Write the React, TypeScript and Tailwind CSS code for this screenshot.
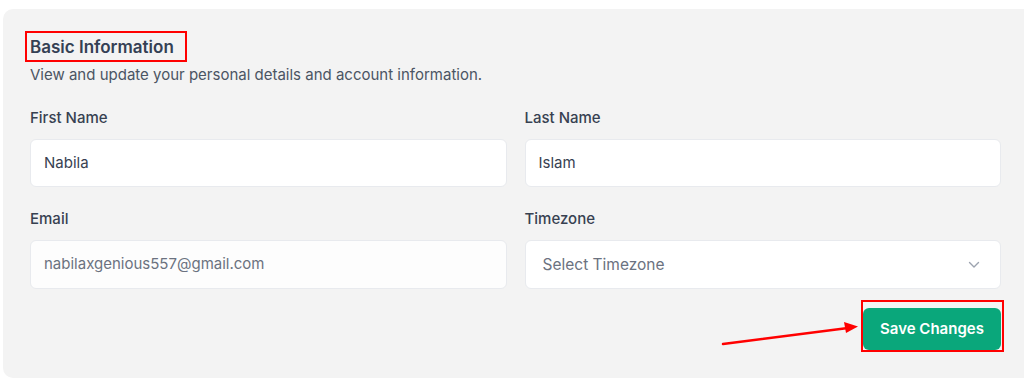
import React from "react";

function Field({ label, children }: { label: string; children: React.ReactNode }) {
  return (
    <div className="flex flex-col">
      <div className="text-[15px] leading-[20px] font-medium text-[#374151]">{label}</div>
      <div className="mt-[11px]">{children}</div>
    </div>
  );
}

export default function App() {
  return (
    <div className="w-[1024px] h-[382px] bg-white overflow-hidden relative" style={{ fontFamily: "Inter, 'Noto Sans', sans-serif" }}>
      <div className="mt-[9px] ml-[3px] w-[1030px] h-[369px] rounded-[10px] bg-[#f3f3f3] pt-[22px] pl-[22px] pr-[32px] box-border">
        <div className="inline-block border-2 border-[#ff0000] pl-[3px] pr-[11px] py-[2.5px]">
          <h2 className="text-[17px] leading-[22px] font-semibold text-[#344054]">Basic Information</h2>
        </div>
        <p className="mt-[3px] pl-[5px] text-[15px] leading-[20px] text-[#4b5563]">
          View and update your personal details and account information.
        </p>
        <div className="mt-[23px] pl-[5px] grid grid-cols-2 gap-x-[18px] gap-y-[22px]">
          <Field label="First Name">
            <div className="h-[48px] rounded-[6px] bg-white border border-[#e8eaee] flex items-center pl-[13px] text-[15px] text-[#374151]">
              Nabila
            </div>
          </Field>
          <Field label="Last Name">
            <div className="h-[48px] rounded-[6px] bg-white border border-[#e8eaee] flex items-center pl-[13px] text-[15px] text-[#374151]">
              Islam
            </div>
          </Field>
          <Field label="Email">
            <div className="h-[49px] rounded-[6px] bg-[#fdfdfd] border border-[#e8eaee] flex items-center pl-[13px] text-[15px] text-[#6b7280]">
              nabilaxgenious557@gmail.com
            </div>
          </Field>
          <Field label="Timezone">
            <div className="h-[49px] rounded-[6px] bg-white border border-[#e8eaee] flex items-center justify-between pl-[17px] pr-[20px] text-[15.5px] text-[#6b7280]">
              <span>Select Timezone</span>
              <svg width="12" height="8" viewBox="0 0 12 8" fill="none">
                <path d="M1.5 1.5 L6 6 L10.5 1.5" stroke="#9ca3af" strokeWidth="1.4" strokeLinecap="round" strokeLinejoin="round" />
              </svg>
            </div>
          </Field>
        </div>
        <div className="mt-[11px] flex justify-end -mr-[3px]">
          <div className="border-2 border-[#ff0000] pt-[6px] pr-[1px]">
            <button className="block h-[42px] w-[138px] rounded-[6px] bg-[#0aa77b] text-white text-[15px] font-semibold">
              Save Changes
            </button>
          </div>
        </div>
      </div>
      <svg className="absolute left-0 top-0 pointer-events-none" width="1024" height="382">
        <line x1="723" y1="344" x2="848" y2="328" stroke="#ff0000" strokeWidth="2.5" strokeLinecap="round" />
        <polygon points="858,326.5 844,322 846,333" fill="#ff0000" />
      </svg>
    </div>
  );
}
